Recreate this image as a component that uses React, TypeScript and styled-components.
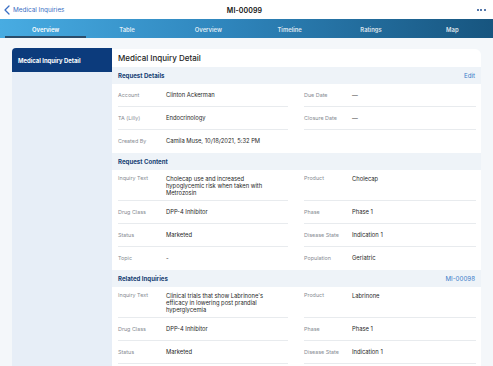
import React from "react";
import styled, { createGlobalStyle } from "styled-components";

const GlobalStyle = createGlobalStyle`
  html, body { margin: 0; padding: 0; }
  body {
    background: #f4f7fa;
    font-family: Inter, "Noto Sans", sans-serif;
    overflow: hidden;
  }
  * { box-sizing: border-box; }
`;

const Page = styled.div`
  width: 493px;
  height: 366px;
  overflow: hidden;
  display: flex;
  flex-direction: column;
`;

const TopBar = styled.div`
  height: 19px;
  background: #ffffff;
  display: grid;
  grid-template-columns: 1fr auto 1fr;
  align-items: center;
  padding: 1px 7px 0 3px;
`;

const BackLink = styled.div`
  display: flex;
  align-items: center;
  gap: 2px;
  color: #3b6fc4;
  font-size: 6.4px;
`;

const Title = styled.div`
  font-size: 7px;
  font-weight: 600;
  color: #111;
  letter-spacing: 0.1px;
`;

const More = styled.div`
  justify-self: end;
  display: flex;
  gap: 1.4px;
`;

const Dot = styled.span`
  width: 2.2px;
  height: 2.2px;
  border-radius: 50%;
  background: #1f4c8f;
`;

const TabBar = styled.div`
  height: 19px;
  background: linear-gradient(90deg, #48ace2 0%, #2f86bd 45%, #17557f 100%);
  display: grid;
  grid-template-columns: repeat(6, 1fr);
  padding: 0 0 0 5px;
`;

const Tab = styled.div<{ $active?: boolean }>`
  display: flex;
  align-items: center;
  justify-content: center;
  color: ${(p) => (p.$active ? "#ffffff" : "rgba(255,255,255,0.85)")};
  font-size: 5.9px;
  font-weight: 600;
  border-bottom: 2px solid ${(p) => (p.$active ? "#2a4d6b" : "transparent")};
  padding-top: 3px;
`;

const Body = styled.div`
  flex: 1;
  display: flex;
  padding: 10px 12px 0;
  min-height: 0;
`;

const Sidebar = styled.div`
  width: 100px;
  background: #e7eef7;
  border-top-left-radius: 4px;
  overflow: hidden;
`;

const SideHeader = styled.div`
  height: 24px;
  background: #0c3b7c;
  color: #ffffff;
  font-size: 5.9px;
  font-weight: 700;
  display: flex;
  align-items: center;
  padding-left: 6px;
`;

const Card = styled.div`
  flex: 1;
  margin-top: 1px;
  background: #ffffff;
  border-top-right-radius: 6px;
  overflow: hidden;
`;

const CardTitle = styled.div`
  height: 18px;
  display: flex;
  align-items: center;
  padding-left: 6px;
  font-size: 8px;
  font-weight: 500;
  color: #1e1e1e;
`;

const SectionHeader = styled.div`
  height: 17px;
  background: #eef3f8;
  display: flex;
  align-items: center;
  justify-content: space-between;
  padding: 0 6px;
`;

const SectionTitle = styled.div`
  font-size: 6.1px;
  font-weight: 700;
  color: #153e73;
`;

const SectionLink = styled.div`
  font-size: 6.2px;
  color: #3a7bc8;
`;

const Grid = styled.div`
  display: grid;
  grid-template-columns: 170px 172px;
  column-gap: 16px;
  padding: 0 5px 0 6px;
`;

const Field = styled.div<{ $multi?: boolean; $last?: boolean }>`
  display: flex;
  align-items: flex-start;
  padding: ${(p) => (p.$multi ? "5px 0 4px" : "7px 0")};
  min-height: 22px;
  line-height: ${(p) => (p.$multi ? "7px" : "8px")};
  border-bottom: 1px solid ${(p) => (p.$last ? "transparent" : "#e8ebee")};
`;

const Label = styled.div`
  width: 48px;
  flex-shrink: 0;
  font-size: 5.4px;
  color: #878c93;
`;

const Value = styled.div`
  width: 100px;
  font-size: 5.8px;
  color: #1f1f1f;
`;

type F = { label: string; value: string } | null;
type RowData = { left: F; right: F; multi?: boolean };

const FieldCell = ({ f, multi, last }: { f: F; multi?: boolean; last?: boolean }) => (
  <Field $multi={multi} $last={last}>
    {f && (
      <>
        <Label>{f.label}</Label>
        <Value>{f.value}</Value>
      </>
    )}
  </Field>
);

const Section = ({
  title,
  link,
  rows,
  open,
}: {
  title: string;
  link?: string;
  rows: RowData[];
  open?: boolean;
}) => (
  <>
    <SectionHeader>
      <SectionTitle>{title}</SectionTitle>
      {link && <SectionLink>{link}</SectionLink>}
    </SectionHeader>
    <Grid>
      {rows.map((r, i) => {
        const last = !open && i === rows.length - 1;
        return (
          <React.Fragment key={i}>
            <FieldCell f={r.left} multi={r.multi} last={last} />
            <FieldCell f={r.right} multi={r.multi} last={last} />
          </React.Fragment>
        );
      })}
    </Grid>
  </>
);

const tabs = ["Overview", "Table", "Overview", "Timeline", "Ratings", "Map"];

export default function App() {
  return (
    <Page>
      <GlobalStyle />
      <TopBar>
        <BackLink>
          <svg width="8" height="10" viewBox="0 0 8 10">
            <path d="M6 1 L2 5 L6 9" fill="none" stroke="#3b6fc4" strokeWidth="1.3" strokeLinecap="round" strokeLinejoin="round" />
          </svg>
          Medical Inquiries
        </BackLink>
        <Title>MI-00099</Title>
        <More>
          <Dot />
          <Dot />
          <Dot />
        </More>
      </TopBar>
      <TabBar>
        {tabs.map((t, i) => (
          <Tab key={i} $active={i === 0}>
            {t}
          </Tab>
        ))}
      </TabBar>
      <Body>
        <Sidebar>
          <SideHeader>Medical Inquiry Detail</SideHeader>
        </Sidebar>
        <Card>
          <CardTitle>Medical Inquiry Detail</CardTitle>
          <Section
            title="Request Details"
            link="Edit"
            rows={[
              { left: { label: "Account", value: "Clinton Ackerman" }, right: { label: "Due Date", value: "—" } },
              { left: { label: "TA (Lilly)", value: "Endocrinology" }, right: { label: "Closure Date", value: "—" } },
              { left: { label: "Created By", value: "Camila Muse, 10/18/2021, 5:32 PM" }, right: null },
            ]}
          />
          <Section
            title="Request Content"
            rows={[
              {
                left: { label: "Inquiry Text", value: "Cholecap use and increased hypoglycemic risk when taken with Metrozosin" },
                right: { label: "Product", value: "Cholecap" },
                multi: true,
              },
              { left: { label: "Drug Class", value: "DPP-4 Inhibitor" }, right: { label: "Phase", value: "Phase 1" } },
              { left: { label: "Status", value: "Marketed" }, right: { label: "Disease State", value: "Indication 1" } },
              { left: { label: "Topic", value: "-" }, right: { label: "Population", value: "Geriatric" } },
            ]}
          />
          <Section
            title="Related Inquiries"
            link="MI-00098"
            open
            rows={[
              {
                left: { label: "Inquiry Text", value: "Clinical trials that show Labrinone's efficacy in lowering post prandial hyperglycemia" },
                right: { label: "Product", value: "Labrinone" },
                multi: true,
              },
              { left: { label: "Drug Class", value: "DPP-4 Inhibitor" }, right: { label: "Phase", value: "Phase 1" } },
              { left: { label: "Status", value: "Marketed" }, right: { label: "Disease State", value: "Indication 1" } },
            ]}
          />
        </Card>
      </Body>
    </Page>
  );
}
